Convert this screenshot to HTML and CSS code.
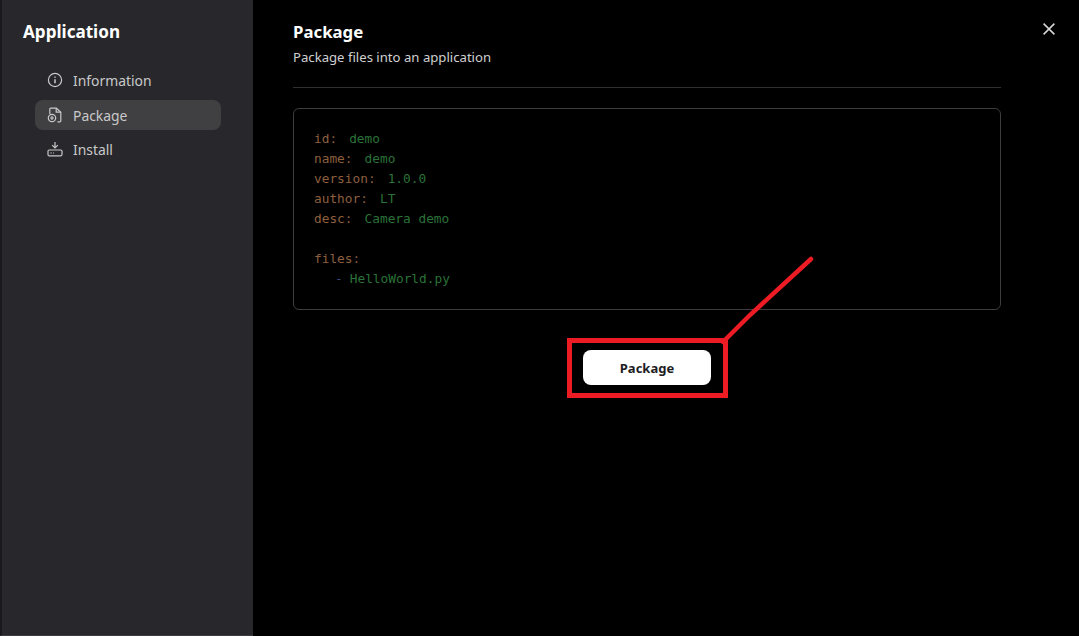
FILE: index.html
```html
<!DOCTYPE html>
<html lang="en">
<head>
<meta charset="utf-8">
<title>Application</title>
<link rel="stylesheet" href="styles.css">
</head>
<body>
<div class="window">
  <aside class="sidebar">
    <h2 class="app-title">Application</h2>
    <nav class="nav">
      <div class="nav-item">
        <svg class="nav-icon" viewBox="0 0 16 16" fill="none" stroke="currentColor" stroke-width="1.2"><circle cx="8" cy="8" r="6.6"/><path d="M8 7.2v4M8 4.4v1.4" stroke-width="1.5"/></svg>
        <span>Information</span>
      </div>
      <div class="nav-item active">
        <svg class="nav-icon" viewBox="0 0 16 16" fill="none" stroke="currentColor" stroke-width="1.2"><path d="M2.8 7V2.2c0-.6.4-1 1-1h5.6l4.4 4v8.6c0 .6-.4 1-1 1H10.4"/><path d="M9.2 1.4v3.8h4.4"/><circle cx="5" cy="11" r="3.7"/><path d="M5 9v4M3 11h4"/></svg>
        <span>Package</span>
      </div>
      <div class="nav-item">
        <svg class="nav-icon" viewBox="0 0 16 16" fill="none" stroke="currentColor" stroke-width="1.2"><rect x="1" y="9" width="14" height="5.8" rx="1.2"/><path d="M8 1v5.6M5.2 4.2 8 7l2.8-2.8M3.4 12h1.4M6 12h1"/></svg>
        <span>Install</span>
      </div>
    </nav>
  </aside>
  <main class="content">
    <header class="head">
      <h1 class="head-title">Package</h1>
      <p class="head-sub">Package files into an application</p>
    </header>
    <div class="code-card">
      <div class="line"><span class="key">id:</span><span class="val">demo</span></div>
      <div class="line"><span class="key">name:</span><span class="val">demo</span></div>
      <div class="line"><span class="key">version:</span><span class="val">1.0.0</span></div>
      <div class="line"><span class="key">author:</span><span class="val">LT</span></div>
      <div class="line"><span class="key">desc:</span><span class="val">Camera demo</span></div>
      <div class="line"></div>
      <div class="line"><span class="key">files:</span></div>
      <div class="line indent"><span class="dash">-</span><span class="val">HelloWorld.py</span></div>
    </div>
    <div class="actions"><button class="primary" type="button">Package</button></div>
  </main>
  <svg class="close" viewBox="0 0 12 12" fill="none" stroke="currentColor" stroke-width="1.5"><path d="M.6.6l10.8 10.8M11.4.6.6 11.4"/></svg>
  <svg class="annotation" viewBox="0 0 1079 636" fill="none" stroke="#ed1c24">
    <rect x="569.5" y="340.5" width="156" height="55" stroke-width="5"/>
    <path d="M723 342 750 315 811 259" stroke-width="4.5" stroke-linecap="round"/>
  </svg>
</div>
</body>
</html>
```
FILE: styles.css
```css
* { box-sizing: border-box; }
html, body { margin: 0; height: 100%; background: #000; }
body { font-family: "Noto Sans", "Open Sans", sans-serif; overflow: hidden; }
.window { position: relative; display: flex; width: 1079px; height: 636px; background: #000; color: #fff; }
.sidebar { width: 253px; flex: none; padding: 20px 32px 0 35px; background: #28282c; border-left: 2px solid #1a1a1d; border-bottom: 1px solid #3c3c40; }
.app-title { margin: 0 0 0 -14px; font-size: 17.1px; line-height: 24px; font-weight: 700; color: #fff; }
.nav { margin-top: 21px; display: flex; flex-direction: column; gap: 4.5px; margin-left: -2px; width: 186px; }
.nav-item { display: flex; align-items: center; gap: 10px; height: 30px; padding-left: 12px; border-radius: 8px; font-size: 13.9px; color: #c8c8ca; }
.nav-item.active { background: #404042; padding-top: 1px; }
.nav-icon { width: 16px; height: 16px; flex: none; }
.content { flex: 1; padding: 20px 78px 0 40px; min-width: 0; }
.head { height: 68px; border-bottom: 1px solid #2e2e30; }
.head-title { margin: 0; font-size: 16.8px; line-height: 24px; font-weight: 700; }
.head-sub { margin: 3px 0 0; font-size: 13.15px; line-height: 20px; color: #d0d0d0; }
.code-card { margin-top: 20px; height: 202px; padding: 20px 20px; border: 1px solid #3d3d3f; border-radius: 6px; font-family: "DejaVu Sans Mono", "Liberation Mono", monospace; font-size: 12.8px; line-height: 20px; }
.line { display: flex; gap: 12px; height: 20px; white-space: pre; }
.indent { padding-left: 21px; gap: 7px; }
.key { color: #8c5f3e; }
.val { color: #2a7238; }
.dash { color: #3a4a7a; }
.actions { display: flex; justify-content: center; margin-top: 40px; }
.primary { width: 128px; height: 35px; padding: 1px 0 0; border: 0; border-radius: 8px; background: #fff; color: #1d1d1f; font: 700 13px "Noto Sans", sans-serif; }
.close { position: absolute; left: 1043px; top: 23px; width: 12px; height: 12px; color: #d8d8d8; }
.annotation { position: absolute; inset: 0; width: 1079px; height: 636px; pointer-events: none; }
```
